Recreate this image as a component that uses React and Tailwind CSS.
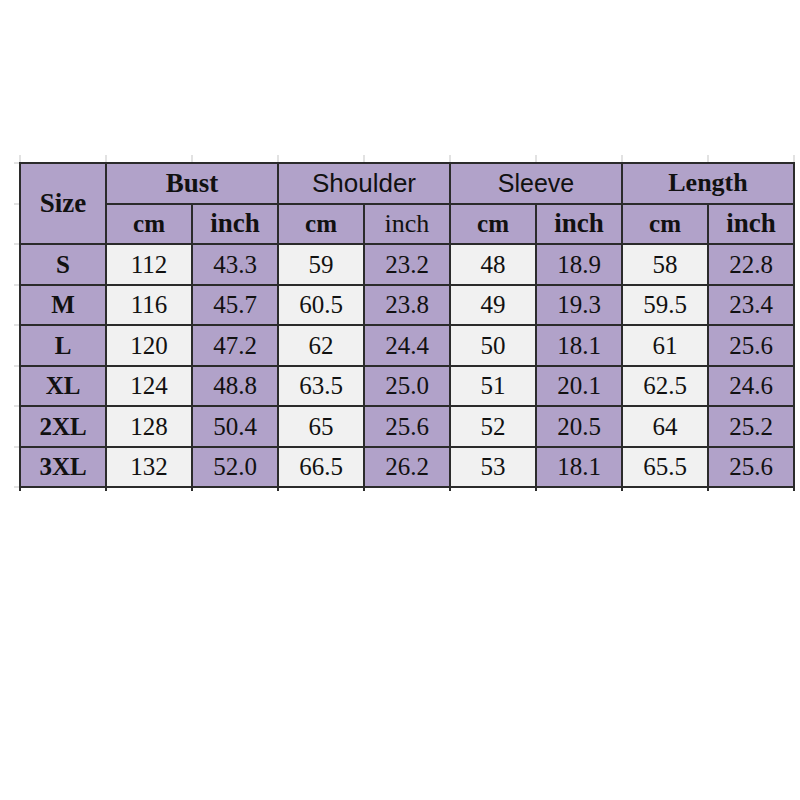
import React from "react";

const P = "bg-[#b1a2c9]";
const W = "bg-[#f1f1f1]";
const serif = "font-['Liberation_Serif',serif]";
const sans = "font-['Liberation_Sans',sans-serif]";

const rows = [
  ["S", "112", "43.3", "59", "23.2", "48", "18.9", "58", "22.8"],
  ["M", "116", "45.7", "60.5", "23.8", "49", "19.3", "59.5", "23.4"],
  ["L", "120", "47.2", "62", "24.4", "50", "18.1", "61", "25.6"],
  ["XL", "124", "48.8", "63.5", "25.0", "51", "20.1", "62.5", "24.6"],
  ["2XL", "128", "50.4", "65", "25.6", "52", "20.5", "64", "25.2"],
  ["3XL", "132", "52.0", "66.5", "26.2", "53", "18.1", "65.5", "25.6"],
];

function Cell({ className = "", children }) {
  return (
    <div className={`flex items-center justify-center leading-none text-[#111] ${className}`}>
      {children}
    </div>
  );
}

export default function App() {
  return (
    <div className="w-[800px] h-[800px] bg-white">
      <div className="pt-[155px] pl-[14px]">
        {/* faint gridline stubs above */}
        <div className="ml-[5px] grid grid-cols-[repeat(9,84px)] gap-x-[2px] px-[2px] h-[7px] bg-[#e2e2e2] w-[776px]">
          {Array.from({ length: 9 }).map((_, i) => (
            <div key={i} className="bg-white" />
          ))}
        </div>
        <div className="flex">
          {/* left gridline stubs */}
          <div className="w-[5px] grid grid-rows-[repeat(8,38.5px)] gap-y-[2px] py-[2px] bg-[#e2e2e2]">
            {Array.from({ length: 8 }).map((_, i) => (
              <div key={i} className="bg-white" />
            ))}
          </div>
          <div className="grid grid-cols-[repeat(9,84px)] grid-rows-[repeat(8,38.5px)] gap-[2px] p-[2px] bg-[#2b2b2b] w-[776px]">
            <Cell className={`${P} ${serif} font-bold row-span-2 text-[27px]`}>Size</Cell>
            <Cell className={`${P} ${serif} font-bold col-span-2 text-[27px]`}>Bust</Cell>
            <Cell className={`${P} ${sans} col-span-2 text-[26px]`}>Shoulder</Cell>
            <Cell className={`${P} ${sans} col-span-2 text-[25px]`}>Sleeve</Cell>
            <Cell className={`${P} ${serif} font-semibold col-span-2 text-[26px]`}>Length</Cell>

            <Cell className={`${P} ${serif} font-bold text-[25px]`}>cm</Cell>
            <Cell className={`${P} ${serif} font-bold text-[27px]`}>inch</Cell>
            <Cell className={`${P} ${serif} font-bold text-[25px]`}>cm</Cell>
            <Cell className={`${P} ${serif} text-[26px]`}>inch</Cell>
            <Cell className={`${P} ${serif} font-bold text-[25px]`}>cm</Cell>
            <Cell className={`${P} ${serif} font-bold text-[27px]`}>inch</Cell>
            <Cell className={`${P} ${serif} font-bold text-[25px]`}>cm</Cell>
            <Cell className={`${P} ${serif} font-bold text-[27px]`}>inch</Cell>

            {rows.map((r) =>
              r.map((v, i) => (
                <Cell
                  key={r[0] + i}
                  className={`${serif} text-[25px] ${i === 0 ? `${P} font-bold` : i % 2 === 1 ? W : P}`}
                >
                  {v}
                </Cell>
              ))
            )}
          </div>
        </div>
        {/* stubs below */}
        <div className="ml-[5px] grid grid-cols-[repeat(9,84px)] gap-x-[2px] px-[2px] h-[3px] bg-[#2b2b2b] w-[776px]">
          {Array.from({ length: 9 }).map((_, i) => (
            <div key={i} className="bg-white" />
          ))}
        </div>
      </div>
    </div>
  );
}
